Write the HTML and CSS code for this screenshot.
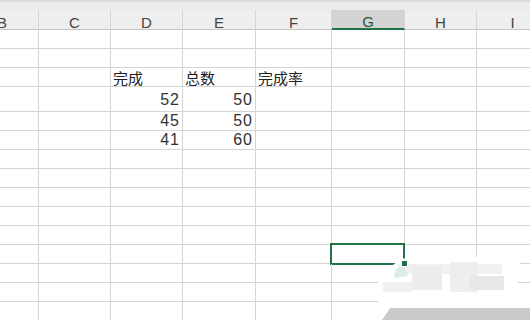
FILE: index.html
```html
<!DOCTYPE html>
<html lang="zh">
<head>
    <meta charset="utf-8">
    <link rel="stylesheet" href="styles.css">
    <title>sheet</title>
</head>
<body>
    <div class="topstrip"></div>

    <div class="sheet">
        <div class="row head">
            <div class="hcell">B</div>
            <div class="hcell">C</div>
            <div class="hcell">D</div>
            <div class="hcell">E</div>
            <div class="hcell">F</div>
            <div class="hcell hsel">G</div>
            <div class="hcell">H</div>
            <div class="hcell">I</div>
        </div>

        <div class="row"><div class="cell"></div><div class="cell"></div><div class="cell"></div><div class="cell"></div><div class="cell"></div><div class="cell"></div><div class="cell"></div><div class="cell"></div></div>
        <div class="row"><div class="cell"></div><div class="cell"></div><div class="cell"></div><div class="cell"></div><div class="cell"></div><div class="cell"></div><div class="cell"></div><div class="cell"></div></div>
        <div class="row">
            <div class="cell"></div><div class="cell"></div>
            <div class="cell txt">完成</div>
            <div class="cell txt">总数</div>
            <div class="cell txt">完成率</div>
            <div class="cell"></div><div class="cell"></div><div class="cell"></div>
        </div>
        <div class="row tall">
            <div class="cell"></div><div class="cell"></div>
            <div class="cell num">52</div>
            <div class="cell num">50</div>
            <div class="cell"></div><div class="cell"></div><div class="cell"></div><div class="cell"></div>
        </div>
        <div class="row">
            <div class="cell"></div><div class="cell"></div>
            <div class="cell num">45</div>
            <div class="cell num">50</div>
            <div class="cell"></div><div class="cell"></div><div class="cell"></div><div class="cell"></div>
        </div>
        <div class="row">
            <div class="cell"></div><div class="cell"></div>
            <div class="cell num">41</div>
            <div class="cell num">60</div>
            <div class="cell"></div><div class="cell"></div><div class="cell"></div><div class="cell"></div>
        </div>
        <div class="row"><div class="cell"></div><div class="cell"></div><div class="cell"></div><div class="cell"></div><div class="cell"></div><div class="cell"></div><div class="cell"></div><div class="cell"></div></div>
        <div class="row"><div class="cell"></div><div class="cell"></div><div class="cell"></div><div class="cell"></div><div class="cell"></div><div class="cell"></div><div class="cell"></div><div class="cell"></div></div>
        <div class="row"><div class="cell"></div><div class="cell"></div><div class="cell"></div><div class="cell"></div><div class="cell"></div><div class="cell"></div><div class="cell"></div><div class="cell"></div></div>
        <div class="row"><div class="cell"></div><div class="cell"></div><div class="cell"></div><div class="cell"></div><div class="cell"></div><div class="cell"></div><div class="cell"></div><div class="cell"></div></div>
        <div class="row"><div class="cell"></div><div class="cell"></div><div class="cell"></div><div class="cell"></div><div class="cell"></div><div class="cell"></div><div class="cell"></div><div class="cell"></div></div>
        <div class="row">
            <div class="cell"></div><div class="cell"></div><div class="cell"></div><div class="cell"></div><div class="cell"></div>
            <div class="cell active"><span class="handle"></span></div>
            <div class="cell"></div><div class="cell"></div>
        </div>
        <div class="row"><div class="cell"></div><div class="cell"></div><div class="cell"></div><div class="cell"></div><div class="cell"></div><div class="cell"></div><div class="cell"></div><div class="cell"></div></div>
        <div class="row"><div class="cell"></div><div class="cell"></div><div class="cell"></div><div class="cell"></div><div class="cell"></div><div class="cell"></div><div class="cell"></div><div class="cell"></div></div>
        <div class="row"><div class="cell"></div><div class="cell"></div><div class="cell"></div><div class="cell"></div><div class="cell"></div><div class="cell"></div><div class="cell"></div><div class="cell"></div></div>
    </div>

    <!-- blurred watermark over the bottom right corner -->
    <svg class="watermark" width="160" height="65" viewBox="370 255 160 65">
        <path d="M397,262 Q405,256 420,257 H505 Q521,258 522,270 L515,291 H530 V320 H378 V276 Z" fill="#ffffff"/>
        <rect x="398" y="264" width="104" height="10" fill="#f1f1f1"/>
        <rect x="412" y="266" width="30" height="24" fill="#ececec"/>
        <rect x="450" y="262" width="28" height="30" fill="#eeeeee"/>
        <rect x="470" y="276" width="34" height="14" fill="#e7e7e7"/>
        <rect x="383" y="282" width="30" height="10" fill="#f0f0f0"/>
        <path d="M396,268 L404,266 L408,276 L394,278 Z" fill="#dcebe4"/>
        <path d="M390,308 H530 V320 H382 Z" fill="#c9c9c9"/>
    </svg>
</body>
</html>
```

FILE: styles.css
```css
body {
    margin: 0px;
    width: 530px;
    height: 320px;
    overflow: hidden;
    background-color: white;
    font-family: "Liberation Sans", Arial, sans-serif;
    position: relative;
}

.topstrip {
    height: 10px;
    box-sizing: border-box;
    background-color: #ebebeb;
    border-top: 2px solid #d9d9d9;
}

.sheet {
    margin-left: -34px;
}

.row {
    display: grid;
    grid-template-columns: 73px 72px 72px 73px 76px 73px 72px 72px;
    height: 19px;
}

.row.tall {
    height: 25px;
}

.row.head {
    height: 20px;
    background-color: #eeeeee;
}

.hcell {
    box-sizing: border-box;
    border-right: 1px solid #d6d6d6;
    border-bottom: 1px solid #c4c4c4;
    display: flex;
    align-items: flex-end;
    justify-content: center;
    font-size: 15px;
    line-height: 13px;
    color: #444444;
}

.hcell.hsel {
    background-color: #d3d3d3;
    border-bottom: 2px solid #217346;
    color: #25573b;
    line-height: 12px;
}

.cell {
    box-sizing: border-box;
    border-right: 1px solid #d4d4d4;
    border-bottom: 1px solid #d4d4d4;
    display: flex;
    align-items: flex-end;
    color: #222222;
    position: relative;
}

.txt {
    padding: 0px 2px 1px 2px;
    font-family: "Noto Sans CJK SC", "Liberation Sans", sans-serif;
    font-size: 15px;
    line-height: 15px;
}

.num {
    justify-content: flex-end;
    padding: 0px 2px 1px 2px;
    font-size: 16px;
    line-height: 16px;
    letter-spacing: 1px;
    color: #333333;
}

.tall .num {
    padding-bottom: 3px;
}

.active::after {
    content: "";
    position: absolute;
    left: -2px;
    top: -2px;
    right: -1px;
    bottom: -2px;
    border: 2px solid #217346;
}

.handle {
    position: absolute;
    right: -4px;
    bottom: -4px;
    width: 5px;
    height: 5px;
    background-color: #217346;
    border: 1px solid white;
    z-index: 1;
}

.watermark {
    position: absolute;
    left: 370px;
    top: 255px;
}
```
